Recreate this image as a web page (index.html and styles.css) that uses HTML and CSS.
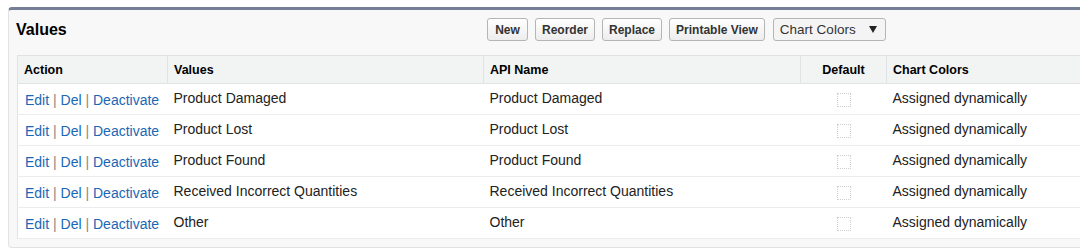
FILE: index.html
```html
<!DOCTYPE html>
<html>
<head>
<meta charset="utf-8">
<link rel="stylesheet" href="styles.css">
</head>
<body>
<div class="page">
  <div class="panel">
    <div class="panel-head">
      <h2 class="title">Values</h2>
      <div class="buttons">
        <button class="btn btn-new">New</button>
        <button class="btn">Reorder</button>
        <button class="btn">Replace</button>
        <button class="btn">Printable View</button>
        <div class="select">Chart Colors <span class="caret"></span></div>
      </div>
    </div>
    <table class="list">
      <colgroup>
        <col class="c-action"><col class="c-values"><col class="c-api"><col class="c-default"><col class="c-colors">
      </colgroup>
      <thead>
        <tr><th>Action</th><th>Values</th><th>API Name</th><th class="center">Default</th><th>Chart Colors</th></tr>
      </thead>
      <tbody>
        <tr><td class="act"><a>Edit</a> | <a>Del</a> | <a>Deactivate</a></td><td>Product Damaged</td><td>Product Damaged</td><td class="center"><span class="cb"></span></td><td>Assigned dynamically</td></tr>
        <tr><td class="act"><a>Edit</a> | <a>Del</a> | <a>Deactivate</a></td><td>Product Lost</td><td>Product Lost</td><td class="center"><span class="cb"></span></td><td>Assigned dynamically</td></tr>
        <tr><td class="act"><a>Edit</a> | <a>Del</a> | <a>Deactivate</a></td><td>Product Found</td><td>Product Found</td><td class="center"><span class="cb"></span></td><td>Assigned dynamically</td></tr>
        <tr><td class="act"><a>Edit</a> | <a>Del</a> | <a>Deactivate</a></td><td>Received Incorrect Quantities</td><td>Received Incorrect Quantities</td><td class="center"><span class="cb"></span></td><td>Assigned dynamically</td></tr>
        <tr><td class="act"><a>Edit</a> | <a>Del</a> | <a>Deactivate</a></td><td>Other</td><td>Other</td><td class="center"><span class="cb"></span></td><td>Assigned dynamically</td></tr>
      </tbody>
    </table>
  </div>
</div>
</body>
</html>
```

FILE: styles.css
```css
html, body {
  margin: 0;
  padding: 0;
  background: #ffffff;
  overflow: hidden;
}
body {
  font-family: "Liberation Sans", Arial, sans-serif;
  font-size: 13px;
  color: #222;
}
.page {
  padding: 7px 0 0 8px;
  width: 1100px;
}
.panel {
  background: #f8f8f8;
  border-top: 3px solid #747e96;
  border-left: 1px solid #e2e2e2;
  border-bottom: 1px solid #e2e2e2;
  border-radius: 4px 0 0 4px;
  width: 1090px;
  padding: 0 0 8px 8px;
}
.panel-head {
  display: grid;
  grid-template-columns: 470px 1fr;
  align-items: center;
  height: 45px;
}
.title {
  margin: 0;
  font-size: 16px;
  font-weight: bold;
  color: #000;
  position: relative;
  left: -1px;
  top: -3px;
}
.buttons {
  display: flex;
  align-items: center;
  gap: 7px;
  position: relative;
  top: -3px;
}
.btn {
  font-family: "Liberation Sans", Arial, sans-serif;
  font-size: 12px;
  font-weight: bold;
  color: #333;
  height: 23px;
  padding: 0 6px;
  border: 1px solid #b5b5b5;
  border-radius: 3px;
  background: linear-gradient(#ffffff, #ededed);
  margin: 0;
}
.btn-new { min-width: 41px; }
.select {
  margin-left: 1px;
  display: flex;
  align-items: center;
  height: 23px;
  box-sizing: border-box;
  padding: 0 8px 0 6px;
  border: 1px solid #b5b5b5;
  border-radius: 3px;
  background: #f4f4f4;
  font-size: 13.5px;
  color: #333;
  width: 113px;
}
.caret {
  margin-left: auto;
  width: 0;
  height: 0;
  border-left: 4px solid transparent;
  border-right: 4px solid transparent;
  border-top: 7px solid #222;
}
.list {
  border-collapse: collapse;
  background: #fff;
  border: 1px solid #e0e3e5;
  width: 1080px;
  table-layout: fixed;
}
.c-action { width: 150px; }
.c-values { width: 316px; }
.c-api { width: 317px; }
.c-default { width: 86px; }
.c-colors { width: 211px; }
th {
  background: #f2f3f3;
  height: 27px;
  padding: 0 6px;
  text-align: left;
  font-size: 12.5px;
  font-weight: bold;
  color: #000;
  border-bottom: 1px solid #e0e3e5;
  border-left: 1px solid #e0e3e5;
}
th:first-child { border-left: none; }
td {
  height: 28px;
  padding: 0 6px 2px 6px;
  border-bottom: 1px solid #ececec;
  white-space: nowrap;
  font-size: 14px;
  color: #222;
}
td.act {
  color: #888;
  padding: 2px 6px 0 7px;
  font-size: 14px;
}
.act a {
  color: #1a67b5;
  text-decoration: none;
}
.center { text-align: center; }
.cb {
  display: inline-block;
  width: 12px;
  height: 12px;
  border: 1px dotted #cfcfcf;
  vertical-align: middle;
  position: relative;
  top: 1px;
}
```
